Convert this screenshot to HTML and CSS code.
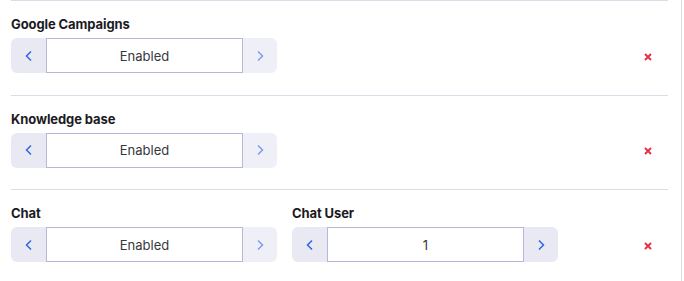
FILE: index.html
```html
<!DOCTYPE html>
<html lang="en">
<head>
    <meta charset="UTF-8">
    <meta name="viewport" content="width=device-width, initial-scale=1.0">
    <title>Integrations</title>
    <link rel="stylesheet" href="styles.css">
</head>
<body>
    <div class="panel">
        <div class="row">
            <div class="fields">
                <div class="field">
                    <label class="label">Google Campaigns</label>
                    <div class="stepper">
                        <button class="step">
                            <svg width="10" height="12" viewBox="0 0 10 12"><path d="M7 1.5 L2.5 6 L7 10.5" /></svg>
                        </button>
                        <div class="value">Enabled</div>
                        <button class="step off">
                            <svg width="10" height="12" viewBox="0 0 10 12"><path d="M3 1.5 L7.5 6 L3 10.5" /></svg>
                        </button>
                    </div>
                </div>
            </div>
            <button class="remove">
                <svg width="8" height="8" viewBox="0 0 8 8"><path d="M1 1 L7 7 M7 1 L1 7" /></svg>
            </button>
        </div>

        <div class="row">
            <div class="fields">
                <div class="field">
                    <label class="label">Knowledge base</label>
                    <div class="stepper">
                        <button class="step">
                            <svg width="10" height="12" viewBox="0 0 10 12"><path d="M7 1.5 L2.5 6 L7 10.5" /></svg>
                        </button>
                        <div class="value">Enabled</div>
                        <button class="step off">
                            <svg width="10" height="12" viewBox="0 0 10 12"><path d="M3 1.5 L7.5 6 L3 10.5" /></svg>
                        </button>
                    </div>
                </div>
            </div>
            <button class="remove">
                <svg width="8" height="8" viewBox="0 0 8 8"><path d="M1 1 L7 7 M7 1 L1 7" /></svg>
            </button>
        </div>

        <div class="row">
            <div class="fields">
                <div class="field">
                    <label class="label">Chat</label>
                    <div class="stepper">
                        <button class="step">
                            <svg width="10" height="12" viewBox="0 0 10 12"><path d="M7 1.5 L2.5 6 L7 10.5" /></svg>
                        </button>
                        <div class="value">Enabled</div>
                        <button class="step off">
                            <svg width="10" height="12" viewBox="0 0 10 12"><path d="M3 1.5 L7.5 6 L3 10.5" /></svg>
                        </button>
                    </div>
                </div>
                <div class="field">
                    <label class="label">Chat User</label>
                    <div class="stepper">
                        <button class="step">
                            <svg width="10" height="12" viewBox="0 0 10 12"><path d="M7 1.5 L2.5 6 L7 10.5" /></svg>
                        </button>
                        <div class="value">1</div>
                        <button class="step">
                            <svg width="10" height="12" viewBox="0 0 10 12"><path d="M3 1.5 L7.5 6 L3 10.5" /></svg>
                        </button>
                    </div>
                </div>
            </div>
            <button class="remove">
                <svg width="8" height="8" viewBox="0 0 8 8"><path d="M1 1 L7 7 M7 1 L1 7" /></svg>
            </button>
        </div>
    </div>
</body>
</html>
```

FILE: styles.css
```css
body {
    margin: 0;
    background: #fff;
    font-family: Inter, "Noto Sans", sans-serif;
    color: #1b1b1f;
}
.panel {
    width: 670px;
    height: 281px;
    padding-left: 11px;
    border-right: 1px solid #dcdce8;
}
.row {
    display: flex;
    align-items: center;
    width: 657px;
    border-top: 1px solid #dcdce8;
    padding: 14px 0 21.5px;
}
.fields {
    flex: 1;
    display: flex;
    gap: 15px;
}
.field {
    display: flex;
    flex-direction: column;
}
.label {
    font-size: 13px;
    font-weight: 700;
    line-height: 18px;
    margin-bottom: 5px;
    letter-spacing: -0.1px;
}
.stepper {
    display: flex;
    width: 266px;
    height: 35px;
}
.step {
    width: 35px;
    border: none;
    padding: 0;
    background: #e8e9f2;
    display: flex;
    align-items: center;
    justify-content: center;
    cursor: pointer;
}
.step:first-child {
    border-radius: 6px 0 0 6px;
}
.step:last-child {
    width: 34px;
    border-radius: 0 6px 6px 0;
}
.step path {
    fill: none;
    stroke: #2f64e6;
    stroke-width: 1.5;
}
.step.off {
    background: #eff0f7;
}
.step.off path {
    stroke: #7a9cf0;
}
.value {
    flex: 1;
    border: 1px solid #b9b6da;
    display: flex;
    align-items: center;
    justify-content: center;
    font-size: 13px;
    color: #38383d;
}
.remove {
    display: flex;
    border: none;
    background: none;
    padding: 0;
    margin: 25px 16px 0 0;
    cursor: pointer;
}
.remove path {
    stroke: #e8304a;
    stroke-width: 2;
}
```
